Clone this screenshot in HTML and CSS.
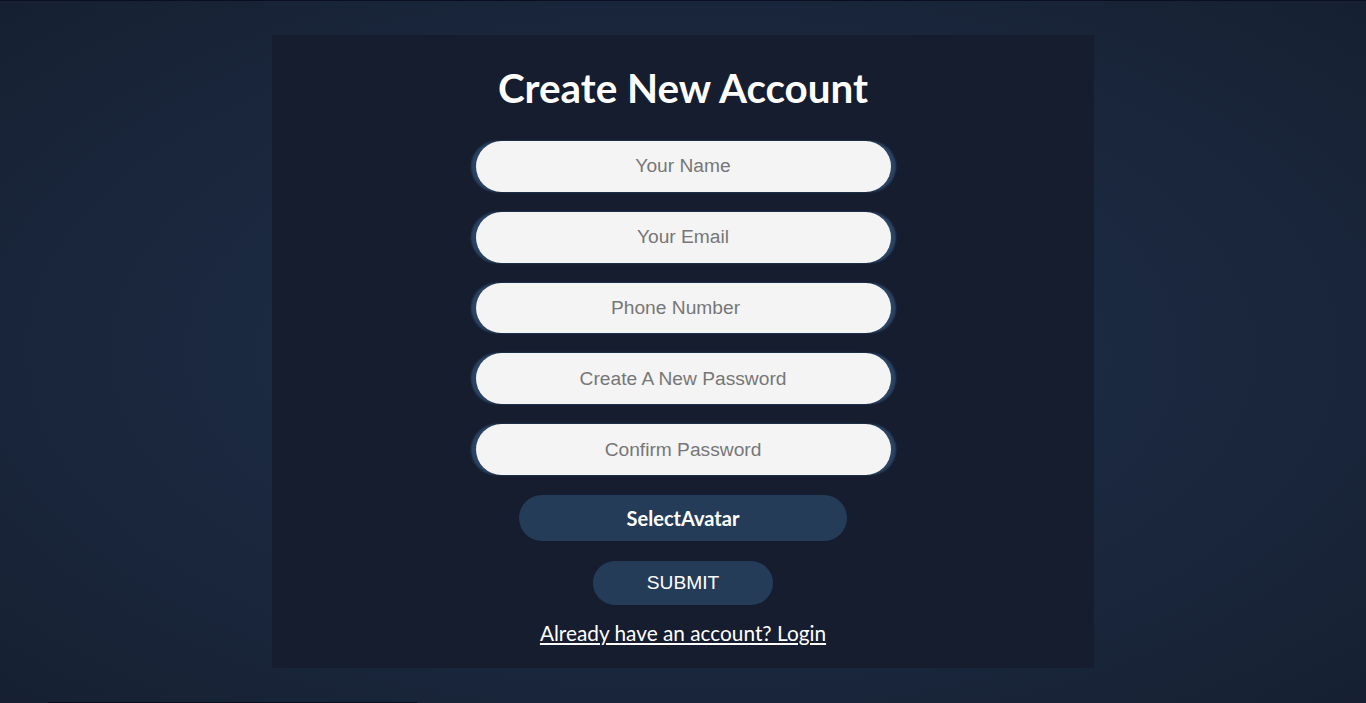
FILE: index.html
```html
<!DOCTYPE html>
<html lang="en">
<head>
<meta charset="utf-8">
<title>Create New Account</title>
<link rel="stylesheet" href="styles.css">
</head>
<body>
<div class="topline"></div>
<main class="page">
  <form class="card">
    <h1 class="title">Create New Account</h1>
    <input class="field" type="text" placeholder="Your Name">
    <input class="field" type="email" placeholder="Your Email">
    <input class="field" type="number" placeholder="Phone Number">
    <input class="field" type="password" placeholder="Create A New Password">
    <input class="field" type="password" placeholder="Confirm Password">
    <button type="button" class="avatar-btn">SelectAvatar</button>
    <button type="button" class="submit-btn">SUBMIT</button>
    <a class="login-link" href="#">Already have an account? Login</a>
  </form>
</main>
<div class="bottomline"></div>
</body>
</html>
```
FILE: styles.css
```css
html, body {
  margin: 0;
  padding: 0;
  height: 100%;
}
body {
  background: radial-gradient(ellipse at center, #1e2e48 0%, #1b2940 45%, #162032 100%);
  font-family: "Liberation Sans", Arial, sans-serif;
  overflow: hidden;
  position: relative;
}
.topline {
  height: 1px;
  background: #0a0f22;
}
.page {
  display: flex;
  justify-content: center;
  padding-top: 34px;
}
.card {
  width: 822px;
  height: 633px;
  box-sizing: border-box;
  background: #161d2f;
  display: flex;
  flex-direction: column;
  align-items: center;
  padding-top: 29px;
}
.title {
  margin: 0 0 29px;
  font-family: Lato, "Open Sans", sans-serif;
  font-weight: 700;
  font-size: 40.4px;
  line-height: 48px;
  color: #ffffff;
}
.field {
  width: 415px;
  height: 50.8px;
  box-sizing: border-box;
  margin: 0 0 20px;
  border: none;
  border-radius: 26px;
  background: #f4f4f4;
  box-shadow: -5px 0 2px #2a4463, 5px 0 2px #2a4463;
  font-family: "Liberation Sans", Arial, sans-serif;
  font-size: 19.2px;
  text-align: center;
  color: #333;
  outline: none;
  padding: 0 10px;
}
.field::placeholder {
  color: #777777;
}
.avatar-btn {
  width: 328px;
  height: 46px;
  border: none;
  border-radius: 23px;
  background: #253c59;
  color: #ffffff;
  font-family: Lato, "Open Sans", sans-serif;
  font-weight: 700;
  font-size: 20px;
  margin: 0 0 20px;
  cursor: pointer;
}
.submit-btn {
  width: 180px;
  height: 44px;
  border: none;
  border-radius: 22px;
  background: #253c59;
  color: #ffffff;
  font-family: "Liberation Sans", Arial, sans-serif;
  font-size: 19.2px;
  margin: 0 0 15px;
  cursor: pointer;
}
.login-link {
  font-family: Lato, "Open Sans", sans-serif;
  font-size: 20.8px;
  line-height: 25px;
  color: #ffffff;
  text-decoration: underline;
}
.bottomline {
  position: absolute;
  left: 48px;
  bottom: 0;
  width: 370px;
  height: 1px;
  background: #0a1020;
}
```
